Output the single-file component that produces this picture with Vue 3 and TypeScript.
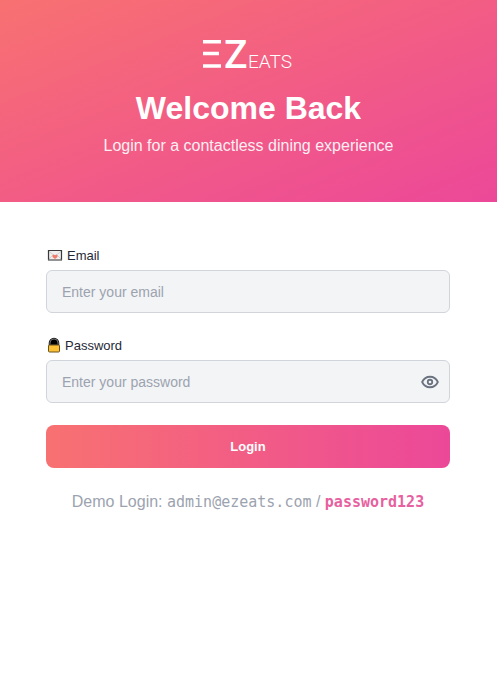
<script setup lang="ts">
import { ref } from 'vue'

const email = ref('')
const password = ref('')
const showPassword = ref(false)
</script>

<template>
  <main class="page">
    <header class="hero">
      <svg class="logo" width="97" height="50" viewBox="0 0 97 50" role="img" aria-label="EZ Eats">
        <path d="M3 10h18v3.500H3zM3 21.700h16v3.500H3zM3 34.200h18v3.500H3z" fill="#fff" />
        <text class="logo-z" x="24" y="38">Z</text>
        <text class="logo-eats" x="48" y="38">EATS</text>
      </svg>
      <h1>Welcome Back</h1>
      <p>Login for a contactless dining experience</p>
    </header>

    <form class="form" @submit.prevent>
      <div class="fields">
        <div class="field">
          <label for="email">
            <svg width="16" height="14" viewBox="0 0 16 14" aria-hidden="true">
              <path d="M1 2.500h14v9H1z" fill="#efefef" />
              <path d="M2 3.500l6 4.500 6-4.500M2 11l4-4M14 11l-4-4" fill="none" stroke="#cfcfcf" />
              <path d="M1.500 12V2.500h13V12" fill="none" stroke="#3a3a3a" stroke-width="1.200" />
              <path d="M1 12h14" stroke="#666" stroke-width="1.400" />
              <path d="M8 11L5.500 9V7.500l1.200-1L8 7.200l1.300-.7 1.200 1V9z" fill="#f27a6b" />
            </svg>
            Email
          </label>
          <div class="control">
            <input id="email" v-model="email" type="email" placeholder="Enter your email" />
          </div>
        </div>

        <div class="field">
          <label for="password">
            <svg width="14" height="16" viewBox="0 0 14 16" aria-hidden="true">
              <path d="M2.500 8V6a4.500 4.500 0 0 1 9 0v2z" fill="#000" stroke="#222" stroke-width="1.600" />
              <path d="M3 7.500V6a4 4 0 0 1 8 0v1.500" fill="none" stroke="#808080" stroke-width=".8" />
              <rect x="1.500" y="8" width="11" height="7" rx="1" fill="#fcc235" stroke="#6b5220" />
            </svg>
            Password
          </label>
          <div class="control">
            <input
              id="password"
              v-model="password"
              :type="showPassword ? 'text' : 'password'"
              placeholder="Enter your password"
            />
            <button
              class="toggle"
              type="button"
              aria-label="Show password"
              :aria-pressed="showPassword"
              @click="showPassword = !showPassword"
            >
              <svg width="18" height="18" viewBox="0 0 24 24" fill="none" stroke="#6b7280" stroke-width="2.400" stroke-linecap="round" stroke-linejoin="round">
                <path d="M1.500 12C3.500 7.800 7.300 5 12 5s8.500 2.800 10.500 7c-2 4.200-5.800 7-10.500 7S3.500 16.200 1.500 12z" />
                <circle cx="12" cy="12" r="3" />
              </svg>
            </button>
          </div>
        </div>
      </div>

      <button class="submit" type="submit">Login</button>

      <p class="demo">Demo Login: <code>admin@ezeats.com</code> / <code class="secret">password123</code></p>
    </form>
  </main>
</template>

<style>
body {
  margin: 0;
  background: #fff;
}
</style>

<style scoped>
* {
  box-sizing: border-box;
}

.page {
  min-height: 100vh;
  font-family: 'Liberation Sans', Arial, sans-serif;
  font-size: 16px;
  background: #fff;
}

.hero {
  display: flex;
  flex-direction: column;
  align-items: center;
  padding: 30px 24px 46px;
  text-align: center;
  color: #fff;
  background: linear-gradient(to bottom right, #f87171, #ec4899);
}

.logo {
  display: block;
}

.logo-z,
.logo-eats {
  font-family: Roboto, sans-serif;
  fill: #fff;
}

.logo-z {
  font-size: 39px;
  font-weight: 500;
}

.logo-eats {
  font-size: 19px;
  font-weight: 300;
}

h1 {
  margin: 8px 0;
  font-size: 32px;
  line-height: 40px;
  font-weight: 700;
}

.hero p {
  margin: 0;
  line-height: 20px;
  opacity: 0.9;
}

.form {
  padding: 45px 47px 46px 46px;
}

.fields {
  display: flex;
  flex-direction: column;
  gap: 24px;
  margin-bottom: 22px;
}

label {
  display: flex;
  align-items: center;
  gap: 4px;
  height: 16px;
  margin: 0 1px 7px;
  font-size: 13px;
  color: #1f2937;
}

.control {
  display: flex;
  align-items: center;
  height: 43px;
  border: 1px solid #d1d5db;
  border-radius: 6px;
  background: #f3f4f6;
}

.control:focus-within {
  border-color: #ec4899;
}

input {
  flex: 1;
  min-width: 0;
  height: 100%;
  padding: 0 15px;
  border: 0;
  outline: 0;
  background: transparent;
  font: inherit;
  font-size: 14px;
  color: #1f2937;
}

input::placeholder {
  color: #9ca3af;
  opacity: 1;
}

.toggle {
  display: flex;
  padding: 0;
  margin-right: 10px;
  border: 0;
  background: none;
  cursor: pointer;
}

.submit {
  display: block;
  width: 100%;
  height: 43px;
  border: 0;
  border-radius: 8px;
  font: inherit;
  font-size: 13px;
  font-weight: 700;
  color: #fff;
  background: linear-gradient(to right, #f87171, #ec4899);
  cursor: pointer;
}

.demo {
  margin: 22px 0 0;
  line-height: 24px;
  text-align: center;
  color: #9ca3af;
}

code {
  font-family: 'DejaVu Sans Mono', monospace;
  font-size: 15px;
}

.secret {
  font-weight: 700;
  color: #e7609f;
}
</style>
